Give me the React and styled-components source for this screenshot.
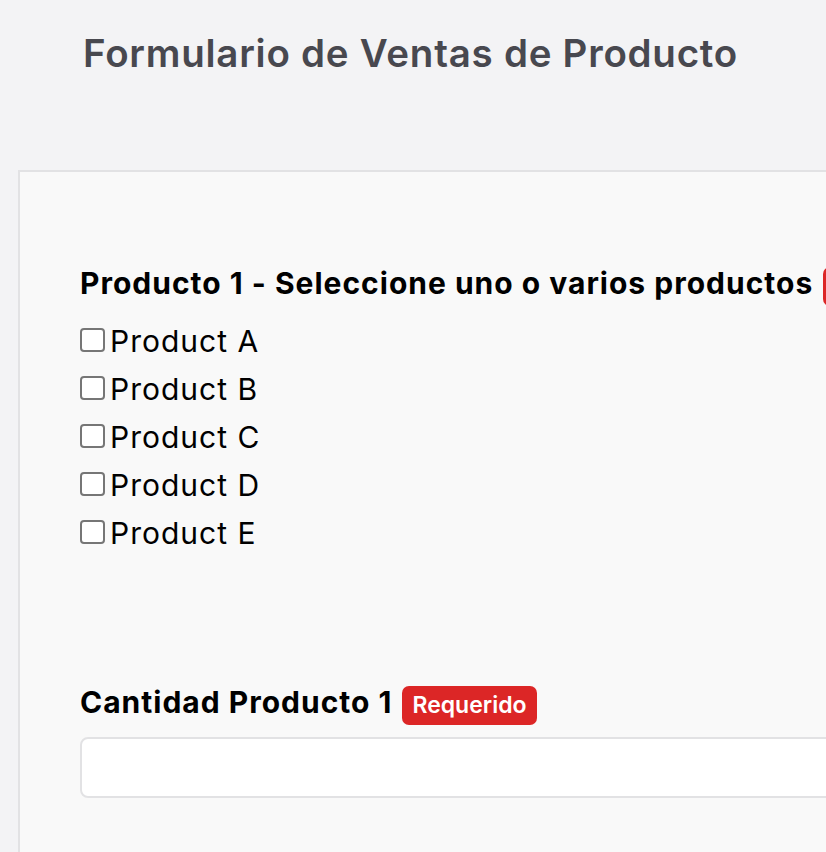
import React from 'react';
import styled, { createGlobalStyle } from 'styled-components';

const GlobalStyle = createGlobalStyle`
  html, body {
    margin: 0;
    padding: 0;
    background: #f3f3f5;
    font-family: Inter, "Noto Sans", "Liberation Sans", sans-serif;
    overflow: hidden;
  }
`;

const productos = ['Product A', 'Product B', 'Product C', 'Product D', 'Product E'];

export default function App() {
  return (
    <>
      <GlobalStyle />
      <Page>
        <Header>
          <Title>Formulario de Ventas de Producto</Title>
        </Header>
        <Card>
          <Field>
            <LabelRow>
              <Label>Producto 1 - Seleccione uno o varios productos</Label>
              <Badge>Requerido</Badge>
            </LabelRow>
            <Options>
              {productos.map((p) => (
                <Option key={p}>
                  <Check type="checkbox" />
                  {p}
                </Option>
              ))}
            </Options>
          </Field>
          <Field $spaced>
            <LabelRow>
              <Label>Cantidad Producto 1</Label>
              <Badge>Requerido</Badge>
            </LabelRow>
            <Input type="text" />
          </Field>
        </Card>
      </Page>
    </>
  );
}

const Page = styled.div`
  min-height: 852px;
`;

const Header = styled.header`
  padding: 31px 0 0 83px;
  height: 170px;
  box-sizing: border-box;
`;

const Title = styled.h1`
  margin: 0;
  font-size: 38.5px;
  line-height: 44px;
  letter-spacing: 0.75px;
  font-weight: 600;
  color: #48484f;
`;

const Card = styled.div`
  margin-left: 18px;
  width: 1300px;
  background: #f9f9f9;
  border: 2px solid #e2e2e4;
  padding: 93px 60px 60px;
`;

const Field = styled.div`
  margin-top: ${(p) => (p.$spaced ? '127px' : '0')};
`;

const LabelRow = styled.div`
  display: flex;
  align-items: baseline;
  gap: 10px;
  white-space: nowrap;
`;

const Label = styled.label`
  font-size: 30px;
  line-height: 36px;
  letter-spacing: 1px;
  font-weight: 700;
  color: #000;
`;

const Badge = styled.span`
  background: #dc2626;
  color: #fff;
  font-size: 23px;
  font-weight: 600;
  line-height: 31px;
  padding: 4px 10px;
  border-radius: 7px;
`;

const Options = styled.div`
  margin-top: 11px;
  display: flex;
  flex-direction: column;
`;

const Option = styled.label`
  display: flex;
  align-items: center;
  height: 48px;
  font-size: 30px;
  letter-spacing: 1px;
  color: #000;
`;

const Check = styled.input`
  appearance: none;
  width: 25px;
  height: 24px;
  margin: -3px 5px 0 0;
  border: 2px solid #767676;
  border-radius: 4px;
  background: #fff;
  box-sizing: border-box;
`;

const Input = styled.input`
  display: block;
  margin-top: 12px;
  width: 100%;
  height: 61px;
  box-sizing: border-box;
  border: 2px solid #e2e2e4;
  border-radius: 8px;
  background: #fff;
`;
